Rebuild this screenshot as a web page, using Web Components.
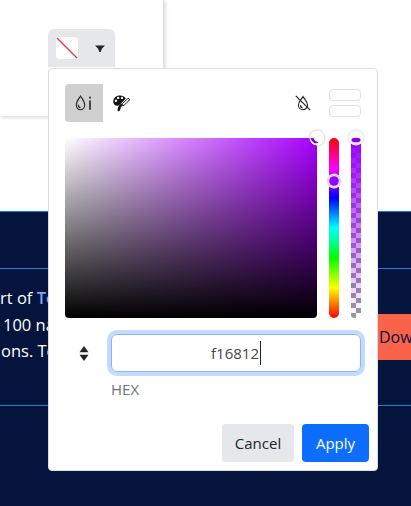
<!DOCTYPE html>
<html>
<head>
<meta charset="utf-8">
<title>Color picker</title>
<style>
    html, body {margin: 0; height: 100%; overflow: hidden;}
    body {background: #04143c; font-family: "Open Sans", "Noto Sans", "Liberation Sans", sans-serif; font-size: 15px;}
</style>
</head>
<body>
<site-top>
    <color-dropdown></color-dropdown>
</site-top>
<site-band>
    <span class='l1'>rt of <b style='color:#7aa7ff;font-weight:600'>Te</b></span>
    <span class='l2' style='padding-left:3px'>100 na</span>
    <span class='l3' style='padding-left:1px'>ons. Te</span>
</site-band>
<script>
class SiteTop extends HTMLElement {
    constructor () {
        super()
        const shadowRoot = this.attachShadow({mode: 'open'})
        shadowRoot.innerHTML = `
        <style>
            :host {display: block; height: 211px; background: #fff;}
            .card {width: 164px; height: 116px; box-sizing: border-box; padding: 29px 0 0 48px;
                border-right: 1px solid #dedede; box-shadow: 1px 1px 4px rgba(0,0,0,.18);}
        </style>
        <div class='card'><slot></slot></div>
        `
    }
}

class SiteBand extends HTMLElement {
    constructor () {
        super()
        const shadowRoot = this.attachShadow({mode: 'open'})
        shadowRoot.innerHTML = `
        <style>
            :host {display: block; border-top: 1px solid #1b7fd6; padding-top: 56px; color: #fff;}
            .band {display: flex; align-items: center; height: 136px; overflow: hidden;
                border-top: 1px solid #1b7fd6; border-bottom: 1px solid #1b7fd6;}
            .copy {width: 367px; flex-shrink: 0; align-self: flex-start; padding-top: 16px;
                display: flex; flex-direction: column; font-size: 16.5px; line-height: 26.5px;}
            .download {flex-shrink: 0; height: 46px; padding: 0 12px; border: 0; background: #f9634a;
                color: #04143c; font: inherit; font-size: 16px;}
        </style>
        <div class='band'>
            <div class='copy'><slot></slot></div>
            <button class='download'>Download</button>
        </div>
        `
    }
}

class ColorDropdown extends HTMLElement {
    constructor () {
        super()
        const shadowRoot = this.attachShadow({mode: 'open'})
        shadowRoot.innerHTML = `
        <style>
            :host {display: block; position: relative; width: 67px; height: 38px;}
            .toggle {display: flex; align-items: center; box-sizing: border-box; width: 67px; height: 38px;
                padding: 0 8px; background: #e5e7eb; border-radius: 6px 6px 0 0;}
            .swatch {width: 22px; height: 22px; display: block;}
            .caret {margin-left: 17px; display: block;}
            color-popup {position: absolute; left: 0; top: 39px;}
        </style>
        <div class='toggle'>
            <svg class='swatch' viewBox='0 0 22 22'>
                <rect width='22' height='22' rx='3' fill='#fff'/>
                <path d='M1 1L21 21' stroke='#e8304a' stroke-width='1.2'/>
            </svg>
            <svg class='caret' width='10' height='7' viewBox='0 0 10 7'>
                <path d='M0 .5H10L7 3.5 5.6 7H4.4L3 3.5Z' fill='#222'/>
            </svg>
        </div>
        <color-popup></color-popup>
        `
    }
}

class ColorPopup extends HTMLElement {
    constructor () {
        super()
        const shadowRoot = this.attachShadow({mode: 'open'})
        shadowRoot.innerHTML = `
        <style>
            :host {display: block; box-sizing: border-box; width: 330px; height: 403px; padding: 15px 8px 8px 16px;
                background: #fff; border: 1px solid #dcdde3; border-radius: 4px; color: #212529;}
            .toolbar {display: flex; align-items: center; height: 38px; width: 296px;}
            .tab {width: 38px; height: 38px; display: flex; align-items: center; justify-content: center; border-radius: 4px 0 0 4px;}
            .tab.on {background: #d0d0d0;}
            .tab.off {margin-right: 1px;}
            .spacer {flex: 1;}
            .saved {display: flex; flex-direction: column; gap: 4px; margin-left: 6px;}
            .saved span {display: block; width: 32px; height: 12px; box-sizing: border-box; border: 1px solid #dee2e6; border-radius: 4px;}
            color-area {margin-top: 16px;}
            .value {display: flex; align-items: center; margin-top: 16px; width: 296px;}
            .mode {width: 38px; display: flex; justify-content: center; margin-right: 8px;}
            .input {flex: 1; height: 38px; box-sizing: border-box; border: 1px solid #86b7fe; border-radius: 6px;
                box-shadow: 0 0 0 4px #c2dbfe; display: flex; align-items: center; justify-content: center;
                color: #3f474e; font-size: 15px;}
            .cursor {display: inline-block; width: 1px; height: 24px; background: #212529; margin-left: 1px;}
            .hex {margin: 5px 0 0 46px; height: 24px; line-height: 24px; color: #6c757d; font-size: 15px;}
            .footer {display: flex; justify-content: flex-end; gap: 8px; margin-top: 23px;}
            .footer button {height: 38px; border: 0; border-radius: 4px; font: inherit; font-size: 15px; padding: 0;}
            .cancel {width: 72px; background: #e5e7eb; color: #212529;}
            .apply {width: 67px; background: #0d6efd; color: #fff;}
        </style>
        <div class='toolbar'>
            <div class='tab on'>
                <svg width='18' height='16' viewBox='0 0 18 16' fill='none' stroke='#212529'>
                    <path d='M5.5 1C3.8 3.9 1.3 6.5 1.3 9.8C1.3 12.8 3.2 14.8 5.5 14.8S9.7 12.8 9.7 9.8C9.7 6.5 7.2 3.9 5.5 1Z' stroke-width='1.1'/>
                    <path d='M3.4 9.6C3.2 11.3 4.2 12.6 5.6 12.8' stroke-width='1.1'/>
                    <path d='M15 5.6V14.8' stroke-width='1.6'/>
                    <path d='M15 1.8V3.6' stroke-width='1.8'/>
                </svg>
            </div>
            <div class='tab'>
                <svg width='18' height='17' viewBox='0 0 18 17'>
                    <path d='M7 0.5C3 .5 .3 3 .3 6.5C.3 9.2 2.2 10.8 4.2 10.8C5.2 10.8 5.8 10.5 6.3 10.1L8.8 7.7L12.8 3.6C11.6 1.6 9.6 .5 7 .5Z' fill='#111'/>
                    <circle cx='3' cy='5.8' r='1.2' fill='#fff'/>
                    <circle cx='5.2' cy='2.9' r='1.2' fill='#fff'/>
                    <circle cx='9' cy='2.9' r='1.2' fill='#fff'/>
                    <path d='M6 10.6L8.2 8.4L9.2 9.5C9 11 8.4 12 7.6 12.6C7.8 14 7.1 15.8 5.6 16.4C4.4 16.2 4.4 14.6 4.8 13.6C5 12.6 5.4 11.4 6 10.6Z' fill='#111'/>
                    <path d='M9.3 8.7L15.2 3.2L16.9 4.7L11 10.3L9.3 10.4Z' fill='none' stroke='#222' stroke-width='1'/>
                </svg>
            </div>
            <div class='spacer'></div>
            <div class='tab off'>
                <svg width='16' height='16' viewBox='0 0 16 16' fill='none' stroke='#212529' stroke-width='1.1'>
                    <path d='M8 1.5C6.6 4.2 3.4 6.8 3.4 10.2C3.4 12.9 5.4 14.7 7.8 14.7S12.6 12.9 12.6 10.2C12.6 6.8 9.4 4.2 8 1.5Z'/>
                    <path d='M5.6 10C5.4 11.5 6.3 12.7 7.6 12.9'/>
                    <path d='M.8 .8L15.2 15.2' stroke-width='1.2'/>
                </svg>
            </div>
            <div class='saved'><span></span><span></span></div>
        </div>
        <color-area></color-area>
        <div class='value'>
            <div class='mode'>
                <svg width='10' height='15' viewBox='0 0 10 15'>
                    <path d='M5 0L9.5 6.3H.5Z M.5 8.7H9.5L5 15Z' fill='#212529'/>
                </svg>
            </div>
            <div class='input'><span>f16812</span><span class='cursor'></span></div>
        </div>
        <div class='hex'>HEX</div>
        <div class='footer'>
            <button class='cancel'>Cancel</button>
            <button class='apply'>Apply</button>
        </div>
        `
    }
}

class ColorArea extends HTMLElement {
    constructor () {
        super()
        const shadowRoot = this.attachShadow({mode: 'open'})
        shadowRoot.innerHTML = `
        <style>
            :host {display: flex; gap: 12px; width: 296px; height: 180px;}
            .sat {position: relative; width: 252px; height: 180px; border-radius: 4px;
                background: linear-gradient(to top, #000, transparent), linear-gradient(to right, #fff, #a800ff);}
            .hue, .alpha {position: relative; width: 10px; height: 180px;}
            .hue {border-radius: 5px;
                background: linear-gradient(to bottom, #f00 0%, #f0f 16.67%, #00f 33.33%, #0ff 50%, #0f0 66.67%, #ff0 83.33%, #f00 100%);}
            .alpha {border-radius: 5px 5px 0 3px;
                background: linear-gradient(to bottom, #9a00ff, rgba(154,0,255,0)),
                    conic-gradient(#999 25%, #fff 0 50%, #999 0 75%, #fff 0) 0 0 / 10px 10px;}
            svg {position: absolute; width: 20px; height: 20px; overflow: visible;}
            .sat svg {right: -10px; top: -10px;}
            .hue svg {left: -5px; top: 33px;}
            .alpha svg {left: -5px; top: -10px;}
        </style>
        <div class='sat'>
            <svg viewBox='-10 -10 20 20'>
                <circle r='7.5' fill='#fff' filter='drop-shadow(0 0 1px rgba(0,0,0,.35))'/>
                <path d='M-6.5 0H-3.5C-3 2 -1 3.6 1.8 4.6C-1.5 6.6 -5.5 4 -6.5 0Z' fill='#8400d8'/>
            </svg>
        </div>
        <div class='hue'>
            <svg viewBox='-10 -10 20 20'>
                <circle r='7.5' fill='#e6d8f4'/>
                <circle r='4.8' fill='#9a00ff'/>
            </svg>
        </div>
        <div class='alpha'>
            <svg viewBox='-10 -10 20 20'>
                <circle r='7.5' fill='#fff' fill-opacity='.9' filter='drop-shadow(0 0 1px rgba(0,0,0,.3))'/>
                <ellipse cy='2' rx='4.6' ry='2.3' fill='#8a00e6'/>
            </svg>
        </div>
        `
    }
}

window.customElements.define('site-top', SiteTop)
window.customElements.define('site-band', SiteBand)
window.customElements.define('color-dropdown', ColorDropdown)
window.customElements.define('color-popup', ColorPopup)
window.customElements.define('color-area', ColorArea)
</script>
</body>
</html>
